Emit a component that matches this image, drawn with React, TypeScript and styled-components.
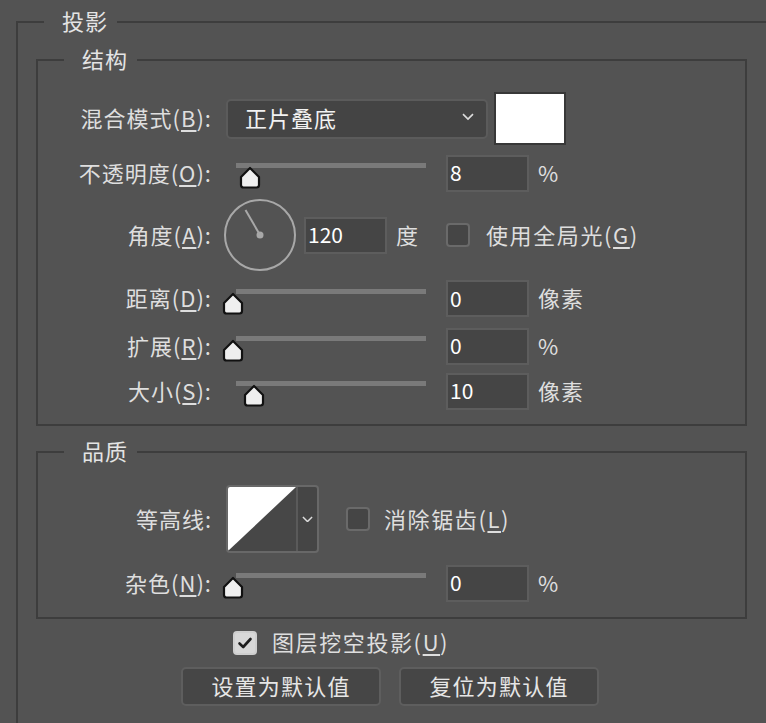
import React from 'react';
import styled, { createGlobalStyle } from 'styled-components';

const GlobalStyle = createGlobalStyle`
  html, body {
    margin: 0;
    padding: 0;
    background: #535353;
    overflow: hidden;
  }
  body {
    font-family: "Noto Sans CJK SC", "Noto Sans", sans-serif;
    color: #dedede;
  }
`;

const Page = styled.div`
  width: 766px;
  height: 723px;
  padding-top: 7px;
  box-sizing: border-box;
  overflow: hidden;
`;

// 그룹 테두리 (fieldset)
const Group = styled.fieldset<{ $outer?: boolean }>`
  margin: 0;
  padding: 0;
  min-inline-size: 0;
  box-sizing: border-box;
  border: 2px solid #3d3d3d;
  width: ${(p) => (p.$outer ? '800px' : '711px')};
  margin-left: ${(p) => (p.$outer ? '16px' : '0')};
  padding-bottom: ${(p) => (p.$outer ? '40px' : '0')};
`;

// 텍스트를 살짝 위로 올리기 위해 아래 padding 사용
const Legend = styled.legend`
  margin-left: 26px;
  padding: 0 9px 4px 18px;
  font-size: 22px;
  line-height: 26px;
  letter-spacing: 1px;
  color: #e4e4e4;
`;

const Content = styled.div`
  padding-left: 18px;
`;

const Rows = styled.div<{ $pt: number; $pb: number }>`
  display: flex;
  flex-direction: column;
  padding: ${(p) => p.$pt}px 0 ${(p) => p.$pb}px;
`;

const Spacer = styled.div<{ $h: number }>`
  height: ${(p) => p.$h}px;
`;

const Row = styled.div<{ $h: number }>`
  display: flex;
  align-items: center;
  height: ${(p) => p.$h}px;
`;

const Label = styled.div`
  flex: none;
  width: 174px;
  margin-right: 14px;
  padding-bottom: 3px;
  text-align: right;
  font-size: 22px;
  letter-spacing: 1px;
  white-space: nowrap;
  & u {
    text-underline-offset: 3px;
  }
`;

const Select = styled.div`
  flex: none;
  width: 262px;
  height: 40px;
  box-sizing: border-box;
  display: flex;
  align-items: center;
  justify-content: space-between;
  padding: 0 12px 3px 17px;
  background: #444444;
  border: 2px solid #5b5b5b;
  border-radius: 5px;
  font-size: 22px;
  letter-spacing: 1px;
  color: #f2f2f2;
`;

const Swatch = styled.div`
  flex: none;
  margin-left: 6px;
  width: 72px;
  height: 53px;
  box-sizing: border-box;
  background: #ffffff;
  border: 2px solid #383838;
`;

const Slider = styled.div`
  position: relative;
  flex: none;
  width: 200px;
  height: 38px;
`;

const Track = styled.div`
  position: absolute;
  left: 10px;
  right: 0;
  top: 9px;
  height: 5px;
  background: #7a7a7a;
`;

const Thumb = styled.svg`
  position: absolute;
  top: 12px;
  width: 24px;
  height: 23px;
`;

const NumBox = styled.input<{ $ml?: number }>`
  flex: none;
  margin: 0 0 0 ${(p) => p.$ml ?? 20}px;
  width: 83px;
  height: 37px;
  box-sizing: border-box;
  padding: 0 0 2px 2px;
  background: #454545;
  border: 2px solid #5d5d5d;
  outline: none;
  color: #ffffff;
  font-family: "Noto Sans CJK SC", "Noto Sans", sans-serif;
  font-size: 21px;
`;

const Unit = styled.span`
  margin-left: 9px;
  padding-bottom: 3px;
  font-size: 22px;
  letter-spacing: 1px;
`;

const Dial = styled.svg`
  flex: none;
  margin-left: -3px;
  width: 74px;
  height: 74px;
`;

const CheckBox = styled.div<{ $checked?: boolean; $ml: number }>`
  flex: none;
  margin-left: ${(p) => p.$ml}px;
  width: 24px;
  height: 24px;
  box-sizing: border-box;
  border-radius: 4px;
  border: 2px solid ${(p) => (p.$checked ? '#cfcfcf' : '#6a6a6a')};
  background: ${(p) => (p.$checked ? '#d8d8d8' : '#454545')};
  display: flex;
  align-items: center;
  justify-content: center;
`;

const CheckText = styled.span<{ $ml: number }>`
  margin-left: ${(p) => p.$ml}px;
  padding-bottom: 3px;
  font-size: 22px;
  letter-spacing: 1.6px;
  white-space: nowrap;
  & u {
    text-underline-offset: 3px;
  }
`;

const Contour = styled.div`
  flex: none;
  display: flex;
  width: 93px;
  height: 68px;
  box-sizing: border-box;
  border: 2px solid #686868;
  border-radius: 4px;
  overflow: hidden;
  background: #454545;
`;

const ContourPreview = styled.svg`
  width: 68px;
  height: 64px;
  flex: none;
  border-right: 2px solid #5a5a5a;
`;

const ContourArrow = styled.div`
  flex: 1;
  display: flex;
  align-items: center;
  justify-content: center;
`;

const BottomCheck = styled.div`
  display: flex;
  align-items: center;
  height: 25px;
  margin-top: 11px;
  padding-left: 197px;
`;

const Buttons = styled.div`
  display: flex;
  gap: 18px;
  margin-top: 12px;
  padding-left: 145px;
`;

const Button = styled.button`
  width: 200px;
  height: 39px;
  box-sizing: border-box;
  background: #464646;
  border: 2px solid #5e5e5e;
  border-radius: 5px;
  color: #e6e6e6;
  font-family: "Noto Sans CJK SC", "Noto Sans", sans-serif;
  font-size: 22px;
  letter-spacing: 1.2px;
  padding: 0 0 3px;
`;

const Chevron = ({ size = 12 }: { size?: number }) => (
  <svg width={size} height={size * 0.6} viewBox="0 0 12 7">
    <polyline points="1,1 6,6 11,1" fill="none" stroke="#dcdcdc" strokeWidth="1.6" />
  </svg>
);

const SliderControl = ({ pct }: { pct: number }) => (
  <Slider>
    <Track />
    <Thumb viewBox="0 0 24 23" style={{ left: `${pct * 1.9 - 5}px` }}>
      <path
        d="M12 2 L21 11 V19 Q21 21.5 18.5 21.5 H5.5 Q3 21.5 3 19 V11 Z"
        fill="#efefef"
        stroke="#111"
        strokeWidth="2.2"
        strokeLinejoin="round"
      />
    </Thumb>
  </Slider>
);

const App: React.FC = () => {
  return (
    <Page>
      <GlobalStyle />
      <Group $outer>
        <Legend>投影</Legend>
        <Content>
          <Spacer $h={8} />
          <Group>
            <Legend>结构</Legend>
            <Rows $pt={16} $pb={7}>
              <Row $h={55}>
                <Label>
                  混合模式(<u>B</u>):
                </Label>
                <Select>
                  <span>正片叠底</span>
                  <Chevron />
                </Select>
                <Swatch />
              </Row>
              <Row $h={54}>
                <Label>
                  不透明度(<u>O</u>):
                </Label>
                <SliderControl pct={9} />
                <NumBox readOnly value="8" />
                <Unit>%</Unit>
              </Row>
              <Row $h={70}>
                <Label>
                  角度(<u>A</u>):
                </Label>
                <Dial viewBox="0 0 74 74">
                  <circle cx="37" cy="37" r="35" fill="none" stroke="#a8a8a8" strokeWidth="2" />
                  <line x1="37" y1="37" x2="22.5" y2="12" stroke="#a8a8a8" strokeWidth="2" />
                  <circle cx="37" cy="37" r="3.5" fill="#a8a8a8" />
                </Dial>
                <NumBox $ml={7} readOnly value="120" />
                <Unit>度</Unit>
                <CheckBox $ml={27} />
                <CheckText $ml={16}>
                  使用全局光(<u>G</u>)
                </CheckText>
              </Row>
              <Row $h={57}>
                <Label>
                  距离(<u>D</u>):
                </Label>
                <SliderControl pct={0} />
                <NumBox readOnly value="0" />
                <Unit>像素</Unit>
              </Row>
              <Row $h={38}>
                <Label>
                  扩展(<u>R</u>):
                </Label>
                <SliderControl pct={0} />
                <NumBox readOnly value="0" />
                <Unit>%</Unit>
              </Row>
              <Row $h={52}>
                <Label>
                  大小(<u>S</u>):
                </Label>
                <SliderControl pct={11} />
                <NumBox readOnly value="10" />
                <Unit>像素</Unit>
              </Row>
            </Rows>
          </Group>
          <Spacer $h={11} />
          <Group>
            <Legend>品质</Legend>
            <Rows $pt={18} $pb={4}>
              <Row $h={68}>
                <Label>等高线:</Label>
                <Contour>
                  <ContourPreview viewBox="0 0 68 64" preserveAspectRatio="none">
                    <rect x="0" y="0" width="68" height="64" fill="#474747" />
                    <polygon points="0,0 68,0 0,64" fill="#ffffff" />
                  </ContourPreview>
                  <ContourArrow>
                    <Chevron size={11} />
                  </ContourArrow>
                </Contour>
                <CheckBox $ml={27} />
                <CheckText $ml={14}>
                  消除锯齿(<u>L</u>)
                </CheckText>
              </Row>
              <Row $h={60}>
                <Label>
                  杂色(<u>N</u>):
                </Label>
                <SliderControl pct={0} />
                <NumBox readOnly value="0" />
                <Unit>%</Unit>
              </Row>
            </Rows>
          </Group>
          <BottomCheck>
            <CheckBox $ml={0} $checked>
              <svg width="16" height="14" viewBox="0 0 16 14">
                <polyline
                  points="2.5,7.5 6.2,11 13.5,3"
                  fill="none"
                  stroke="#1e1e1e"
                  strokeWidth="2.6"
                  strokeLinecap="round"
                  strokeLinejoin="round"
                />
              </svg>
            </CheckBox>
            <CheckText $ml={15}>
              图层挖空投影(<u>U</u>)
            </CheckText>
          </BottomCheck>
          <Buttons>
            <Button>设置为默认值</Button>
            <Button>复位为默认值</Button>
          </Buttons>
        </Content>
      </Group>
    </Page>
  );
};

export default App;
